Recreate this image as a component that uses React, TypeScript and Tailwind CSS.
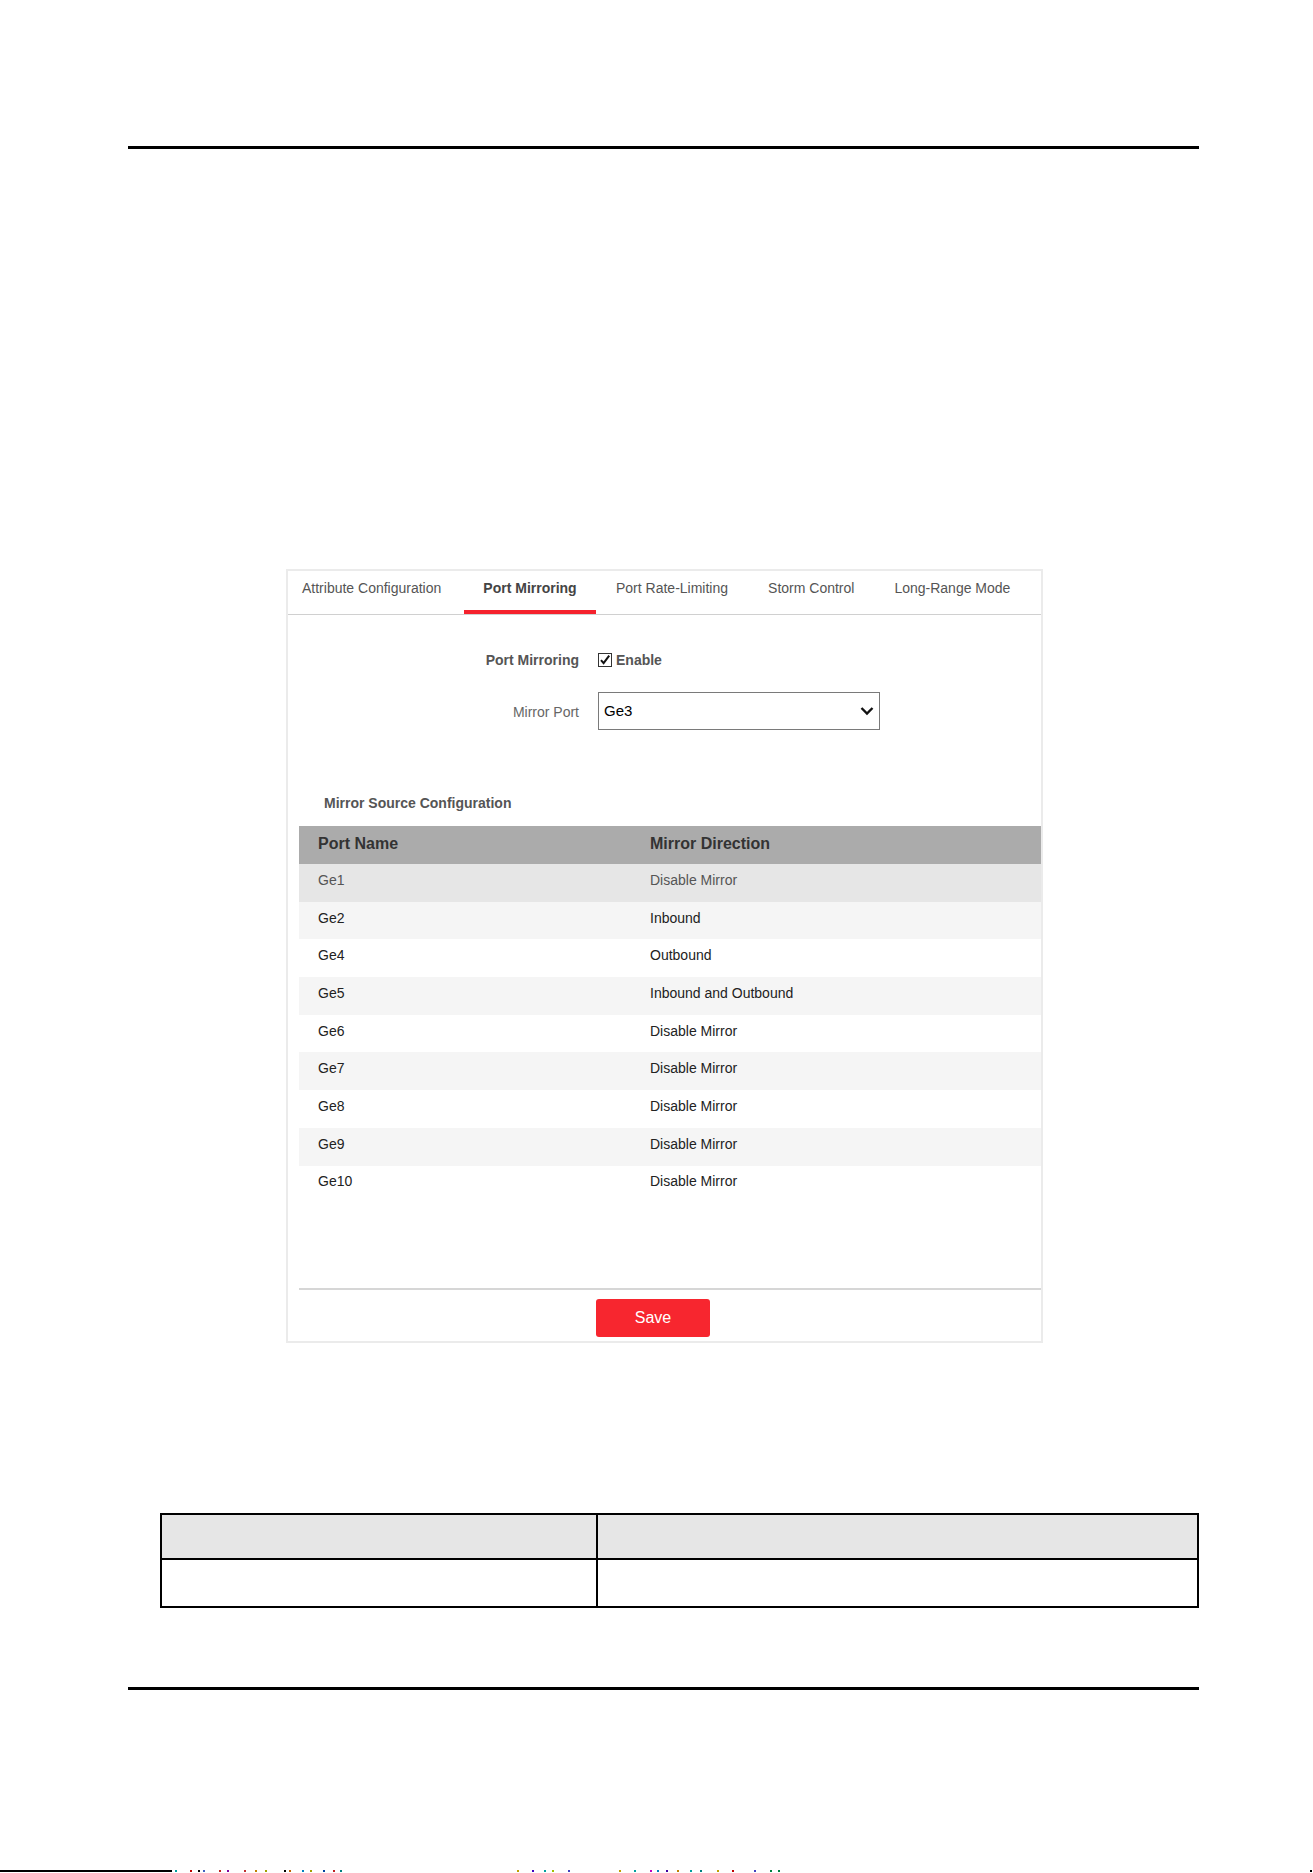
import React from "react";

const tabs = [
  "Attribute Configuration",
  "Port Mirroring",
  "Port Rate-Limiting",
  "Storm Control",
  "Long-Range Mode",
];

const rows: [string, string][] = [
  ["Ge1", "Disable Mirror"],
  ["Ge2", "Inbound"],
  ["Ge4", "Outbound"],
  ["Ge5", "Inbound and Outbound"],
  ["Ge6", "Disable Mirror"],
  ["Ge7", "Disable Mirror"],
  ["Ge8", "Disable Mirror"],
  ["Ge9", "Disable Mirror"],
  ["Ge10", "Disable Mirror"],
];

// small coloured marks along the bottom edge of the scanned page
const marks = [
  { x: 3, c: "#00a0a0" }, { x: 18, c: "#c00000" }, { x: 26, c: "#000000" }, { x: 31, c: "#4060c0" },
  { x: 47, c: "#c02020" }, { x: 55, c: "#8000a0" }, { x: 72, c: "#c03030" }, { x: 83, c: "#c08000" },
  { x: 93, c: "#a0a000" }, { x: 112, c: "#000000" }, { x: 117, c: "#c06000" }, { x: 130, c: "#0080c0" },
  { x: 138, c: "#a0a000" }, { x: 151, c: "#0040a0" }, { x: 161, c: "#c02020" }, { x: 168, c: "#008080" },
  { x: 345, c: "#c0a000" }, { x: 360, c: "#4000c0" }, { x: 372, c: "#00a0a0" }, { x: 380, c: "#a0c000" },
  { x: 396, c: "#4040c0" }, { x: 447, c: "#c0a000" }, { x: 462, c: "#00a0a0" }, { x: 478, c: "#c000c0" },
  { x: 485, c: "#0080c0" }, { x: 494, c: "#4000a0" }, { x: 505, c: "#c08000" }, { x: 518, c: "#00a0a0" },
  { x: 528, c: "#008080" }, { x: 545, c: "#c0a000" }, { x: 560, c: "#c00000" }, { x: 582, c: "#4040c0" },
  { x: 598, c: "#008040" }, { x: 606, c: "#008040" },
];

export default function App() {
  return (
    <div
      className="w-[1313px] h-[1873px] bg-white flex flex-col overflow-hidden"
      style={{ fontFamily: '"Liberation Sans", Arial, sans-serif' }}
    >
      {/* header rule */}
      <div className="mt-[146px] ml-[128px] w-[1071px] h-[3px] bg-black shrink-0" />

      {/* settings panel */}
      <div className="mt-[420px] ml-[286px] w-[757px] h-[774px] border-2 border-[#ebebeb] flex flex-col shrink-0">
        {/* tab bar */}
        <div className="flex h-[44px] border-b border-[#d0d0d0] text-[14px] leading-[20px] text-[#555]">
          {tabs.map((t, i) => {
            const active = i === 1;
            const cls =
              i === 0
                ? "w-[176px] pl-[14px]"
                : i === 1
                ? "w-[132px] justify-center"
                : "px-[20px]";
            return (
              <div key={t} className={`relative flex pt-[7px] ${cls}`}>
                <span className={active ? "font-bold text-[#444]" : ""}>{t}</span>
                {active && (
                  <div className="absolute left-0 right-0 bottom-0 h-[4px] bg-[#f5222d]" />
                )}
              </div>
            );
          })}
        </div>

        {/* form */}
        <div className="flex items-center mt-[35px] h-[20px] text-[14px] leading-[20px]">
          <div className="w-[291px] text-right font-bold text-[#555]">Port Mirroring</div>
          <div className="ml-[19px] flex items-center gap-[4px]">
            <span className="w-[14px] h-[14px] border border-[#333] bg-white flex items-center justify-center">
              <svg width="12" height="12" viewBox="0 0 12 12">
                <path d="M2 6.2 L4.6 9.2 L10.2 1.6" fill="none" stroke="#111" strokeWidth="2" />
              </svg>
            </span>
            <span className="font-bold text-[#555]">Enable</span>
          </div>
        </div>

        <div className="flex items-center mt-[22px] h-[37px] text-[14px]">
          <div className="w-[291px] text-right text-[#666] pt-[4px]">Mirror Port</div>
          <div className="ml-[19px] w-[282px] h-[38px] border border-[#7a7a7a] flex items-center justify-between pl-[5px] pr-[5px]">
            <span className="text-[15px] text-black pt-[1px]">Ge3</span>
            <svg width="14" height="10" viewBox="0 0 14 10">
              <path d="M1.5 2 L7 7.5 L12.5 2" fill="none" stroke="#111" strokeWidth="2.4" />
            </svg>
          </div>
        </div>

        <div className="mt-[64px] pl-[36px] h-[20px] text-[14px] leading-[20px] font-bold text-[#555]">
          Mirror Source Configuration
        </div>

        {/* mirror source table */}
        <div className="mt-[13px] ml-[11px] flex flex-col">
          <div className="flex items-center h-[38px] pb-[2px] bg-[#ababab] text-[16px] font-bold text-[#333]">
            <div className="w-[332px] pl-[19px]">Port Name</div>
            <div className="pl-[19px]">Mirror Direction</div>
          </div>
          {rows.map(([port, dir], i) => (
            <div
              key={port}
              className={`flex items-center h-[37.7px] pb-[5px] text-[14px] ${
                i === 0
                  ? "bg-[#e6e6e6] text-[#555]"
                  : i % 2 === 1
                  ? "bg-[#f5f5f5] text-[#222]"
                  : "bg-white text-[#222]"
              }`}
            >
              <div className="w-[332px] pl-[19px]">{port}</div>
              <div className="pl-[19px]">{dir}</div>
            </div>
          ))}
        </div>

        <div className="mt-[85px] ml-[11px] h-[2px] bg-[#d6d6d6]" />

        <div className="mt-[9px] ml-[308px]">
          <button className="w-[114px] h-[38px] rounded-[3px] bg-[#f7262f] text-white text-[16px]">
            Save
          </button>
        </div>
      </div>

      {/* parameter table */}
      <div className="mt-[170px] ml-[160px] w-[1039px] border-2 border-black flex flex-col shrink-0">
        <div className="flex h-[45px] bg-[#e6e6e6] border-b-2 border-black">
          <div className="w-[436px] border-r-2 border-black" />
          <div className="flex-1" />
        </div>
        <div className="flex h-[46px]">
          <div className="w-[436px] border-r-2 border-black" />
          <div className="flex-1" />
        </div>
      </div>

      {/* footer rule */}
      <div className="mt-[79px] ml-[128px] w-[1071px] h-[3px] bg-black shrink-0" />

      {/* bottom edge */}
      <div className="mt-auto mb-[1px] h-[2px] flex shrink-0">
        <div className="w-[172px] h-[2px] bg-black" />
        <div className="relative flex-1">
          {marks.map((m, i) => (
            <span
              key={i}
              className="absolute top-0 w-[2px] h-[2px]"
              style={{ left: m.x, backgroundColor: m.c }}
            />
          ))}
          <span className="absolute top-0 right-[1px] w-[2px] h-[2px] bg-black" />
        </div>
      </div>
    </div>
  );
}
